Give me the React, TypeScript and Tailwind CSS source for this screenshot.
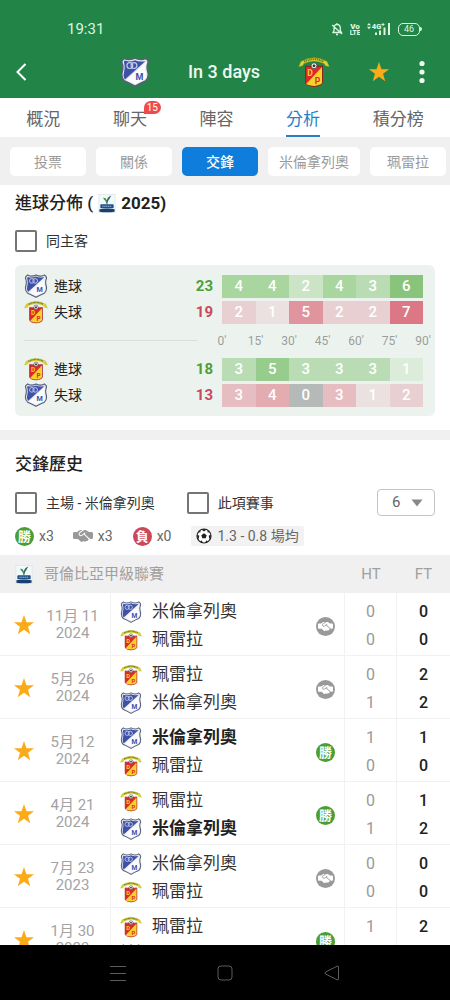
import React from "react";
import { FaHandshakeSimple } from "react-icons/fa6";

type Team = "mil" | "per";
type Result = "win" | "draw";

const NAMES: Record<Team, string> = { mil: "米倫拿列奧", per: "珮雷拉" };

function MilCrest({ className }: { className: string }) {
  return (
    <svg viewBox="0 0 30 30" className={className} aria-hidden="true">
      <path d="M2.500 3L4.500 1.200Q6 2.600 9 2.600Q12.500 2.600 15 1.200Q17.500 2.600 21 2.600Q24 2.600 25.500 1.200L27.500 3Q28.800 5 27.400 7.500Q26.600 11 27.800 15Q29.200 20.500 25.500 24Q21 25.800 15 29.200Q9 25.800 4.500 24Q0.800 20.500 2.200 15Q3.400 11 2.600 7.500Q1.200 5 2.500 3Z" fill="#e4e7ef" stroke="#566079" strokeWidth="1.400" />
      <path d="M25.300 4.200L5 22.400Q2.800 19.500 4 15.500Q5.300 11 4.400 7.200Q3.400 5 4.600 3.600Q6.500 4.400 9 4.400Q12.500 4.400 15 3.200Q17.500 4.400 21 4.400Q23.500 4.400 25.300 4.200Z" fill="#3d51a8" />
      <path d="M25.800 5.300L6.200 23L15 27.200L24.500 22.800Q27.400 19.500 26.100 15.500Q24.800 11 25.600 7.200Z" fill="#fbfbfd" />
      <circle cx="9.800" cy="8.600" r="2.900" fill="none" stroke="#c3cbea" strokeWidth="1.200" />
      <circle cx="14" cy="8.600" r="2.900" fill="none" stroke="#c3cbea" strokeWidth="1.200" />
      <text x="19.500" y="23" textAnchor="middle" fontSize="9" fontWeight="700" fill="#3c4fa6" fontFamily="Roboto, sans-serif">M</text>
    </svg>
  );
}

function PerCrest({ className }: { className: string }) {
  return (
    <svg viewBox="0 0 32 32" className={className} aria-hidden="true">
      <path d="M0.800 10.500L3 5.500Q16 -1.800 29 5.500L31.200 10.500L27.500 9.800L26.200 7.600Q16 2.600 5.800 7.600L4.500 9.800Z" fill="#ddd22e" stroke="#a8a51e" strokeWidth="0.400" />
      <path d="M6 5.700Q16 0.600 26 5.700" fill="none" stroke="#6e7420" strokeWidth="1.900" strokeDasharray="1.200 0.700" />
      <path d="M7.500 10Q11 11 16 9.600Q21 11 24.500 10V26.500Q24.500 29.500 16 30.500Q7.500 29.500 7.500 26.500Z" fill="#dd2a26" stroke="#8e1c1c" strokeWidth="0.900" />
      <path d="M24 11L8.200 28Q9.400 29.300 16 29.900Q24 29 24 26.500Z" fill="#f8d22c" />
      <circle cx="16" cy="9.700" r="2.900" fill="#f4f4f4" stroke="#333333" strokeWidth="0.700" />
      <path d="M16 8.200L17.500 9.300L16.900 11H15.100L14.500 9.300Z" fill="#333333" />
      <text x="12" y="20" textAnchor="middle" fontSize="8.500" fontWeight="700" fill="#f8d22c" fontFamily="Roboto, sans-serif">D</text>
      <text x="19.500" y="27.500" textAnchor="middle" fontSize="8.500" fontWeight="700" fill="#dd2a26" fontFamily="Roboto, sans-serif">P</text>
    </svg>
  );
}

function Crest({ team, className }: { team: Team; className: string }) {
  return team === "mil" ? <MilCrest className={className} /> : <PerCrest className={className} />;
}

function LeagueLogo({ className }: { className: string }) {
  return (
    <svg viewBox="0 0 18 20" className={className} aria-hidden="true">
      <rect x="0.500" y="0.500" width="17" height="19" fill="#f3f8f8" stroke="#d3dfe0" strokeWidth="0.600" />
      <path d="M5 4Q8 3.500 8.500 6.500Q9.500 3 13 1.800Q12.300 5.500 10 6.800Q9.300 8.500 9.500 10.500H8.200Q8.300 8 7 6.800Q5.300 6 5 4Z" fill="#3f8f52" />
      <path d="M12.800 2Q10 4 9.200 9" fill="none" stroke="#24507c" strokeWidth="0.900" />
      <rect x="2" y="10.800" width="14" height="4.200" rx="0.800" fill="#1d4f86" />
      <path d="M4 12.900H14" stroke="#9fc0df" strokeWidth="1" strokeDasharray="1.500 0.500" />
      <path d="M1 16Q9 14.500 17 16V18.600Q9 20 1 18.600Z" fill="#17406f" />
    </svg>
  );
}

function Star({ className }: { className: string }) {
  return (
    <svg viewBox="0 0 24 24" className={className} fill="#fbab18" aria-hidden="true">
      <path d="M12 1.200L14.700 9H23L16.400 14L18.800 22L12 17.200L5.200 22L7.600 14L1 9H9.300Z" />
    </svg>
  );
}

function Ball({ className }: { className: string }) {
  return (
    <svg viewBox="0 0 16 16" className={className} aria-hidden="true">
      <circle cx="8" cy="8" r="7" fill="#ffffff" stroke="#222222" strokeWidth="1.200" />
      <path d="M8 5.200L10.700 7.200L9.700 10.300H6.300L5.300 7.200Z M5.400 1.500Q8 0.500 10.600 1.500L8 3.400Z M1 6.200L3.200 7.700L2.800 11.200Q1 9.500 1 6.200Z M15 6.200L12.800 7.700L13.200 11.200Q15 9.500 15 6.200Z M4 13.200L5.800 12.400L7 14.900Q5.200 14.700 4 13.200Z M12 13.200L10.200 12.400L9 14.900Q10.800 14.700 12 13.200Z M2.200 4.200L4.600 2.200L4.300 4.600Z M13.800 4.200L11.400 2.200L11.700 4.600Z" fill="#222222" />
    </svg>
  );
}

function StatusBar() {
  return (
    <div className="flex h-[46px] items-center justify-between pt-3 pr-7 pl-[67px] text-[#d9f7e1]">
      <span className="text-[15px]">19:31</span>
      <div className="flex items-center gap-[7px]">
        <svg viewBox="0 0 12 14" className="h-[14px] w-3" fill="none" stroke="currentColor" strokeWidth="1.300" aria-hidden="true">
          <path d="M2 10.500H10.500L9.300 8.500V5.500Q9 2.600 6 2.300Q3.200 2.600 3 5.500V8.500Z M5 12.500H7M6 1V2.300M1.200 3L11 12" />
        </svg>
        <svg viewBox="0 0 10 14" className="h-[14px] w-[10px]" fill="currentColor" aria-hidden="true">
          <text x="5" y="6.500" textAnchor="middle" fontSize="8" fontWeight="900" fontFamily="Roboto, sans-serif">Vo</text>
          <text x="5" y="13.200" textAnchor="middle" fontSize="6.500" fontWeight="900" fontFamily="Roboto, sans-serif">LTE</text>
        </svg>
        <svg viewBox="0 0 24 14" className="h-[14px] w-6" fill="currentColor" aria-hidden="true">
          <path d="M0 3.300L2 1L4 3.300ZM0 4.800L2 7.200L4 4.800Z" />
          <text x="4.800" y="6.800" fontSize="7.500" fontWeight="900" fontFamily="Roboto, sans-serif">4G</text>
          <path d="M14.500 2.500H17.500M16 1V4" stroke="currentColor" strokeWidth="1" />
          <path d="M8 10.500H10V13H8ZM12 8.500H14V13H12ZM16.500 5.500H18.500V13H16.500ZM21 1H23V13H21Z" />
        </svg>
        <span className="flex items-center">
          <span className="flex h-[13px] w-[22px] items-center justify-center rounded-[5px] border border-[#d9f7e1] text-[9px] leading-none">46</span>
          <span className="h-1 w-0.5 rounded-r bg-[#d9f7e1]" />
        </span>
      </div>
    </div>
  );
}

function MatchHeader() {
  return (
    <div className="grid h-[52px] grid-cols-[1fr_auto_1fr] items-center px-4">
      <button type="button" aria-label="返回" className="flex h-8 w-8 items-center justify-self-start text-white">
        <svg viewBox="0 0 11 18" className="h-[18px] w-[11px]" fill="none" stroke="currentColor" strokeWidth="2" aria-hidden="true">
          <path d="M9.500 1L1.500 9L9.500 17" />
        </svg>
      </button>
      <div className="flex items-center gap-[38px]">
        <MilCrest className="h-[30px] w-[30px]" />
        <h1 className="text-lg font-medium whitespace-nowrap text-[#eefaf1]">In 3 days</h1>
        <PerCrest className="h-8 w-8" />
      </div>
      <div className="flex items-center gap-[19px] justify-self-end">
        <button type="button" aria-label="收藏" className="flex w-6 justify-center">
          <Star className="h-[22px] w-[22px]" />
        </button>
        <button type="button" aria-label="更多" className="flex w-6 justify-center">
          <svg viewBox="0 0 6 24" className="h-6 w-[6px]" fill="#eefaf1" aria-hidden="true">
            <circle cx="3" cy="3.500" r="2.600" />
            <circle cx="3" cy="12" r="2.600" />
            <circle cx="3" cy="20.500" r="2.600" />
          </svg>
        </button>
      </div>
    </div>
  );
}

const TABS = [
  { label: "概況" },
  { label: "聊天", badge: "15" },
  { label: "陣容" },
  { label: "分析", active: true },
  { label: "積分榜" },
];

function Tabs() {
  return (
    <nav className="flex h-[39px] shrink-0 bg-white">
      {TABS.map((t) => (
        <button type="button" key={t.label} className="flex flex-auto justify-center">
          <span
            className={
              t.active
                ? "relative flex h-full items-center border-b-2 border-[#2a7fc4] pt-[6px] text-[17px] text-[#2a7fc4]"
                : "relative flex h-full items-center border-b-2 border-transparent pt-[6px] text-[17px] text-[#666666]"
            }
          >
            {t.label}
            {t.badge && (
              <span className="absolute top-[3px] -right-[14px] rounded-t-full rounded-br-full bg-[#f04a4c] px-[3px] text-[10px] leading-[13px] text-white">
                {t.badge}
              </span>
            )}
          </span>
        </button>
      ))}
    </nav>
  );
}

const SUBTABS = ["投票", "關係", "交鋒", "米倫拿列奧", "珮雷拉"];

function SubTabs() {
  return (
    <nav className="flex shrink-0 gap-[10px] overflow-hidden bg-[#f0f0f0] pt-[10px] pb-[9px] pl-[10px]">
      {SUBTABS.map((s) => (
        <button
          type="button"
          key={s}
          className={
            s === "交鋒"
              ? "h-[29px] min-w-[76px] shrink-0 rounded-[5px] bg-[#0f7ddb] px-[11px] text-sm font-medium text-white"
              : "h-[29px] min-w-[76px] shrink-0 rounded-[5px] bg-white px-[11px] text-sm text-[#9a9a9a]"
          }
        >
          {s}
        </button>
      ))}
    </nav>
  );
}

function Check({ label }: { label: string }) {
  return (
    <label className="flex items-center gap-[9px] text-sm text-[#333333]">
      <input type="checkbox" className="h-[22px] w-[22px] appearance-none rounded-[2px] border-2 border-[#757575] bg-white checked:bg-[#757575]" />
      {label}
    </label>
  );
}

interface GoalRow {
  team: Team;
  label: string;
  total: number;
  totalClass: string;
  cells: [number, string][];
}

const FIRST: GoalRow[] = [
  {
    team: "mil", label: "進球", total: 23, totalClass: "text-[#4c9f38]",
    cells: [[4, "bg-[#a9d59f]"], [4, "bg-[#a9d59f]"], [2, "bg-[#cbe4c6]"], [4, "bg-[#a9d59f]"], [3, "bg-[#badcb4]"], [6, "bg-[#88c47b]"]],
  },
  {
    team: "per", label: "失球", total: 19, totalClass: "text-[#c9495c]",
    cells: [[2, "bg-[#e8cfd1]"], [1, "bg-[#eae1e0]"], [5, "bg-[#e0959e]"], [2, "bg-[#e8cfd1]"], [2, "bg-[#e8cfd1]"], [7, "bg-[#dc7886]"]],
  },
];

const SECOND: GoalRow[] = [
  {
    team: "per", label: "進球", total: 18, totalClass: "text-[#4c9f38]",
    cells: [[3, "bg-[#badcb4]"], [5, "bg-[#98cc8c]"], [3, "bg-[#badcb4]"], [3, "bg-[#badcb4]"], [3, "bg-[#badcb4]"], [1, "bg-[#dcecdb]"]],
  },
  {
    team: "mil", label: "失球", total: 13, totalClass: "text-[#c9495c]",
    cells: [[3, "bg-[#e6bdc1]"], [4, "bg-[#e3acb1]"], [0, "bg-[#b5b9b8]"], [3, "bg-[#e6bdc1]"], [1, "bg-[#eae1e0]"], [2, "bg-[#e8cfd1]"]],
  },
];

function GoalRows({ rows }: { rows: GoalRow[] }) {
  return (
    <div className="flex flex-col gap-1">
      {rows.map((r) => (
        <div key={r.label} className="flex h-[22px] items-center">
          <div className="flex w-[198px] shrink-0 items-center pr-[9px]">
            <Crest team={r.team} className="h-6 w-6" />
            <span className="ml-[6px] text-sm text-[#222222]">{r.label}</span>
            <span className={`ml-auto text-[15px] font-bold ${r.totalClass}`}>{r.total}</span>
          </div>
          <div className="grid h-full flex-1 grid-cols-6">
            {r.cells.map(([n, bg], i) => (
              <span key={i} className={`flex items-center justify-center text-[15px] font-medium text-white ${bg}`}>{n}</span>
            ))}
          </div>
        </div>
      ))}
    </div>
  );
}

function GoalDistribution() {
  return (
    <section className="px-[15px] pb-[14px]">
      <h2 className="flex h-[37px] items-center gap-[5px] text-[17px] font-medium text-[#222222]">
        <span>進球分佈 (</span>
        <LeagueLogo className="h-[19px] w-[18px]" />
        <span className="font-bold">2025)</span>
      </h2>
      <div className="flex pt-2 pb-[13px]">
        <Check label="同主客" />
      </div>
      <div className="rounded-md bg-[#ecf3ef] py-[10px] pr-3 pl-[9px]">
        <GoalRows rows={FIRST} />
        <div className="flex h-[35px] items-center">
          <div className="mr-[25px] h-px w-[173px] shrink-0 bg-[#d9e0dc]" />
          <div className="flex flex-1 justify-between text-xs text-[#9a9f9c]">
            {["0'", "15'", "30'", "45'", "60'", "75'", "90'"].map((m) => (
              <span key={m} className="flex w-0 justify-center">{m}</span>
            ))}
          </div>
        </div>
        <GoalRows rows={SECOND} />
      </div>
    </section>
  );
}

function ResultBadge({ result }: { result: Result }) {
  return result === "win" ? (
    <span className="flex h-[19px] w-[19px] shrink-0 items-center justify-center rounded-full bg-[#4a9e35] text-[13px] leading-none font-bold text-white">勝</span>
  ) : (
    <span className="flex h-[19px] w-[19px] shrink-0 items-center justify-center rounded-full bg-[#999999] text-white">
      <FaHandshakeSimple className="h-[15px] w-[15px]" />
    </span>
  );
}

interface Match {
  date: string;
  year: string;
  teams: [Team, Team];
  winner?: Team;
  result: Result;
  ht: [number, number];
  ft: [number, number];
}

const MATCHES: Match[] = [
  { date: "11月 11", year: "2024", teams: ["mil", "per"], result: "draw", ht: [0, 0], ft: [0, 0] },
  { date: "5月 26", year: "2024", teams: ["per", "mil"], result: "draw", ht: [0, 1], ft: [2, 2] },
  { date: "5月 12", year: "2024", teams: ["mil", "per"], winner: "mil", result: "win", ht: [1, 0], ft: [1, 0] },
  { date: "4月 21", year: "2024", teams: ["per", "mil"], winner: "mil", result: "win", ht: [0, 1], ft: [1, 2] },
  { date: "7月 23", year: "2023", teams: ["mil", "per"], result: "draw", ht: [0, 0], ft: [0, 0] },
  { date: "1月 30", year: "2023", teams: ["per", "mil"], result: "win", ht: [1, 1], ft: [2, 3] },
];

function MatchRow({ m }: { m: Match }) {
  return (
    <tr>
      <td className="border-r border-b border-[#f2f2f2] pt-0.5">
        <div className="flex items-center pl-[13px]">
          <button type="button" aria-label="收藏賽事" className="shrink-0">
            <Star className="h-[22px] w-[22px]" />
          </button>
          <div className="flex-1 text-center text-[15px] leading-[17px] text-[#a3a3a3]">
            <div>{m.date}</div>
            <div>{m.year}</div>
          </div>
        </div>
      </td>
      <td className="border-r border-b border-[#f2f2f2] pt-[5px] pr-[9px] pb-px pl-[9px]">
        <div className="flex items-center justify-between">
          <div>
            {m.teams.map((t) => (
              <div key={t} className="flex h-7 items-center gap-[10px]">
                <Crest team={t} className="h-[22px] w-[22px]" />
                <span className={m.winner === t ? "text-[17px] font-bold text-[#222222]" : "text-[17px] text-[#333333]"}>{NAMES[t]}</span>
              </div>
            ))}
          </div>
          <ResultBadge result={m.result} />
        </div>
      </td>
      <td className="border-r border-b border-[#f2f2f2] pt-[5px] pb-px text-center text-base leading-7 text-[#999999]">
        <div>{m.ht[0]}</div>
        <div>{m.ht[1]}</div>
      </td>
      <td className="border-b border-[#f2f2f2] pt-[5px] pb-px text-center text-base leading-7 font-medium text-[#222222]">
        <div>{m.ft[0]}</div>
        <div>{m.ft[1]}</div>
      </td>
    </tr>
  );
}

function History() {
  return (
    <section>
      <div className="px-[15px] pb-[9px]">
        <h2 className="flex h-[49px] items-center text-[17px] font-medium text-[#222222]">交鋒歷史</h2>
        <div className="flex items-center">
          <Check label="主場 - 米倫拿列奧" />
          <div className="ml-8">
            <Check label="此項賽事" />
          </div>
          <div className="relative ml-auto">
            <select aria-label="場數" defaultValue="6" className="block h-[27px] w-[58px] appearance-none rounded border border-[#c4c4c4] bg-white pl-[14px] text-[15px] leading-none text-[#666666]">
              <option value="6">6</option>
              <option value="10">10</option>
            </select>
            <svg viewBox="0 0 12 8" className="pointer-events-none absolute top-[10px] right-3 h-2 w-3" fill="#888888" aria-hidden="true">
              <path d="M0.500 0.500H11.500L6 7.500Z" />
            </svg>
          </div>
        </div>
        <div className="mt-[10px] flex h-5 items-center text-sm text-[#666666]">
          <ResultBadge result="win" />
          <span className="ml-[5px]">x3</span>
          <FaHandshakeSimple className="ml-[19px] h-5 w-5 text-[#999999]" />
          <span className="ml-[5px]">x3</span>
          <span className="ml-5 flex h-[19px] w-[19px] items-center justify-center rounded-full bg-[#cb4759] text-[13px] leading-none font-bold text-white">負</span>
          <span className="ml-[5px]">x0</span>
          <span className="ml-5 flex h-5 items-center gap-[5px] rounded-[2px] bg-[#f2f2f2] px-[5px]">
            <Ball className="h-4 w-4" />
            1.3 - 0.8 場均
          </span>
        </div>
      </div>
      <table className="w-full table-fixed border-separate border-spacing-0">
        <colgroup>
          <col className="w-[111px]" />
          <col />
          <col className="w-[52px]" />
          <col className="w-[53px]" />
        </colgroup>
        <thead className="bg-[#f0f0f0] text-[15px] text-[#a0a0a0]">
          <tr className="h-[38px]">
            <th colSpan={2} scope="col" className="pl-[15px] text-left font-normal">
              <span className="flex items-center gap-[11px]">
                <LeagueLogo className="h-[19px] w-[18px]" />
                哥倫比亞甲級聯賽
              </span>
            </th>
            <th scope="col" className="font-normal">HT</th>
            <th scope="col" className="font-normal">FT</th>
          </tr>
        </thead>
        <tbody>
          {MATCHES.map((m) => (
            <MatchRow key={m.date} m={m} />
          ))}
        </tbody>
      </table>
    </section>
  );
}

function SystemNav() {
  return (
    <nav className="flex h-[55px] shrink-0 items-center bg-black px-16 text-[#5c5c5c]">
      <button type="button" aria-label="最近" className="flex flex-1 justify-center">
        <svg viewBox="0 0 16 16" className="h-4 w-4" stroke="currentColor" aria-hidden="true">
          <path d="M0 1.500H16M0 8.500H16M0 15.500H16" />
        </svg>
      </button>
      <button type="button" aria-label="主頁" className="flex flex-1 justify-center">
        <svg viewBox="0 0 16 16" className="h-4 w-4" fill="none" stroke="currentColor" aria-hidden="true">
          <rect x="1" y="1" width="14" height="14" rx="3" />
        </svg>
      </button>
      <button type="button" aria-label="返回上頁" className="flex flex-1 justify-center">
        <svg viewBox="0 0 16 16" className="h-4 w-4" fill="none" stroke="currentColor" strokeLinejoin="round" aria-hidden="true">
          <path d="M14.500 2V14Q14.500 15.500 13 14.700L1.500 9Q0.500 8 1.500 7L13 1.300Q14.500 0.500 14.500 2Z" />
        </svg>
      </button>
    </nav>
  );
}

export default function App() {
  return (
    <div className="flex h-screen flex-col overflow-hidden bg-white font-['Roboto','Noto_Sans_CJK_TC',sans-serif]">
      <header className="shrink-0 bg-[#238448]">
        <StatusBar />
        <MatchHeader />
      </header>
      <Tabs />
      <SubTabs />
      <main className="min-h-0 flex-1 overflow-y-auto [scrollbar-width:none]">
        <GoalDistribution />
        <div className="h-[10px] bg-[#f0f0f0]" />
        <History />
      </main>
      <SystemNav />
    </div>
  );
}
